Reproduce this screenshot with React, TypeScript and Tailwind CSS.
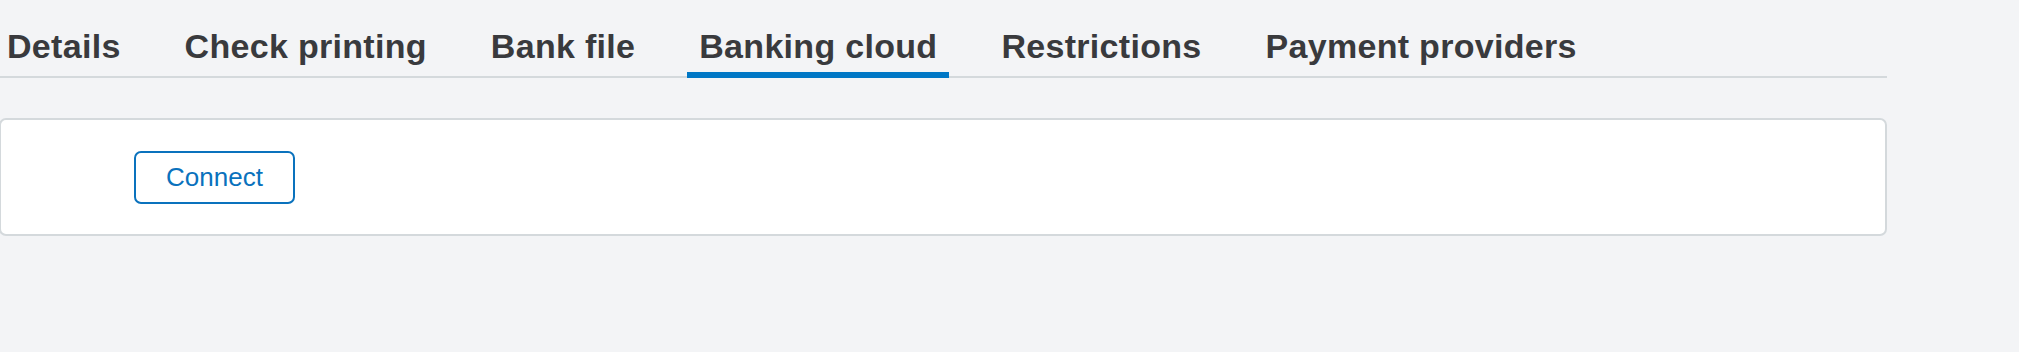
import React from "react";

const tabs = ["Details", "Check printing", "Bank file", "Banking cloud", "Restrictions", "Payment providers"];

export default function App() {
  return (
    <div
      className="w-[2019px] h-[352px] bg-[#f3f4f6] overflow-hidden"
      style={{ fontFamily: '"Liberation Sans", Arial, sans-serif' }}
    >
      <div className="w-[1887px] pt-[26px]">
        <div className="flex items-end gap-[40px] border-b-2 border-[#d4d9dc] -ml-[5px]">
          {tabs.map((t) => {
            const active = t === "Banking cloud";
            return (
              <div
                key={t}
                className={
                  "px-[12px] pb-[6px] -mb-[2px] text-[34px] leading-[40px] font-bold text-[#393a3d] tracking-[0.3px] whitespace-nowrap border-b-[6px] " +
                  (active ? "border-[#0077c5]" : "border-transparent")
                }
              >
                {t}
              </div>
            );
          })}
        </div>
        <div className="mt-[40px] -ml-px h-[118px] bg-white border-2 border-[#d4d9dc] rounded-[7px] flex items-center pl-[133px]">
          <button className="w-[161px] h-[53px] border-2 border-[#0a72bd] rounded-[7px] text-[26px] text-[#0a72bd] bg-white flex items-center justify-center">
            Connect
          </button>
        </div>
      </div>
    </div>
  );
}
